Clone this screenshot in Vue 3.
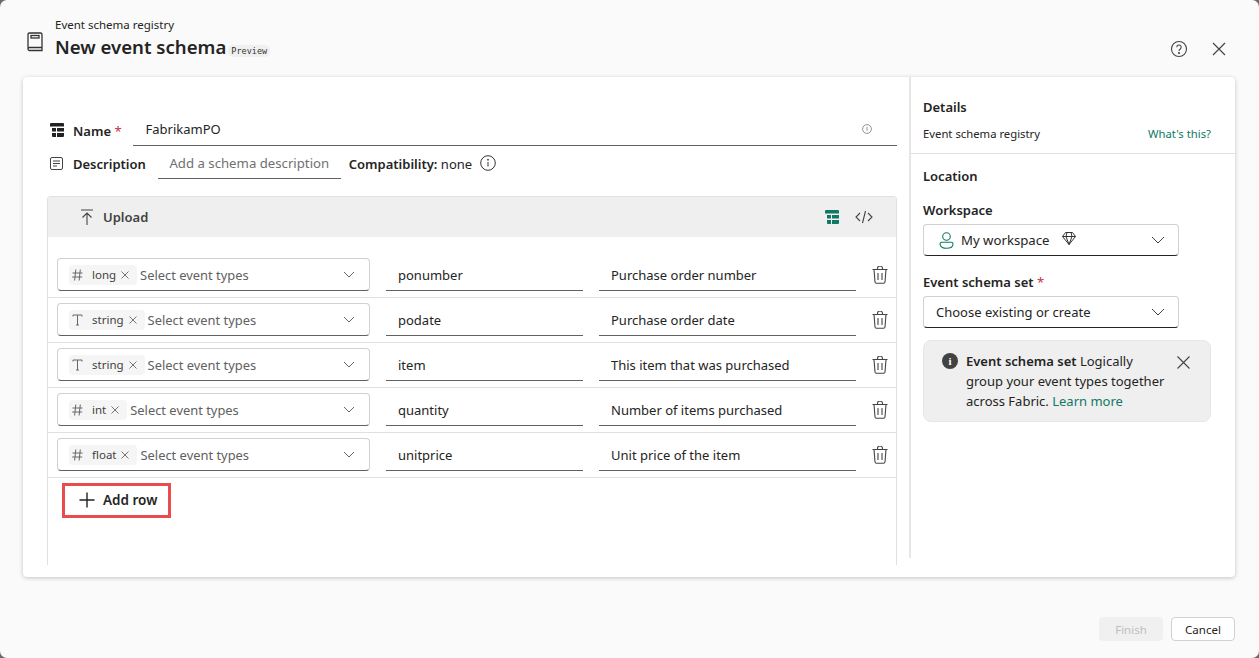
<script setup>
const rows = [
  { glyph: 'hash', type: 'long', name: 'ponumber', desc: 'Purchase order number' },
  { glyph: 'text', type: 'string', name: 'podate', desc: 'Purchase order date' },
  { glyph: 'text', type: 'string', name: 'item', desc: 'This item that was purchased' },
  { glyph: 'hash', type: 'int', name: 'quantity', desc: 'Number of items purchased' },
  { glyph: 'hash', type: 'float', name: 'unitprice', desc: 'Unit price of the item' },
]
</script>

<template>
  <div class="shell">
    <!-- header -->
    <header class="head">
      <svg class="book" width="18" height="22" viewBox="0 0 18 22" fill="none" stroke="#333" stroke-width="1.3">
        <path d="M2 18V3.500A1.500 1.500 0 0 1 3.500 2h11A1.500 1.500 0 0 1 16 3.500V19.500H3.500A1.500 1.500 0 0 1 2 18a1.500 1.500 0 0 1 1.500-1.500H16" />
        <rect x="5" y="4.500" width="8" height="2.500" />
      </svg>
      <div class="head-text">
        <div class="crumb">Event schema registry</div>
        <div class="title-line">
          <h1>New event schema</h1>
          <span class="preview">Preview</span>
        </div>
      </div>
      <div class="head-actions">
        <svg width="18" height="18" viewBox="0 0 18 18" fill="none" stroke="#444" stroke-width="1.100">
          <circle cx="9" cy="9" r="7.500" />
          <path d="M6.800 7.200a2.200 2.200 0 1 1 3.500 1.800c-.8.600-1.300 1-1.300 2" />
          <circle cx="9" cy="13" r=".5" fill="#444" />
        </svg>
        <svg width="14" height="14" viewBox="0 0 14 14" stroke="#444" stroke-width="1.200">
          <path d="M1 1l12 12M13 1L1 13" />
        </svg>
      </div>
    </header>

    <main class="card">
      <section class="form">
        <div class="name-row">
          <svg class="lead" width="14" height="14" viewBox="0 0 14 14" fill="#222">
            <path d="M0 1a1 1 0 0 1 1-1h12a1 1 0 0 1 1 1v2.500H0zM2 5h4v3.500H2zM7 5h7v3.500H7zM2 10h4v4H3a1 1 0 0 1-1-1zM7 10h7v3a1 1 0 0 1-1 1H7z" />
          </svg>
          <span class="lbl">Name <i class="req">*</i></span>
          <div class="name-input">
            <span>FabrikamPO</span>
            <svg width="10" height="10" viewBox="0 0 10 10" fill="none" stroke="#888" stroke-width=".9">
              <circle cx="5" cy="5" r="4.400" />
              <path d="M5 2.800v3.800" />
            </svg>
          </div>
        </div>

        <div class="desc-row">
          <svg class="lead lead-desc" width="13" height="13" viewBox="0 0 13 13" fill="none" stroke="#444">
            <rect x=".5" y=".5" width="12" height="12" rx="1.500" />
            <path d="M3 4h7M3 6.500h7M3 9h4" />
          </svg>
          <span class="lbl">Description</span>
          <div class="desc-input">Add a schema description</div>
          <span class="compat"><b>Compatibility:</b> none</span>
          <svg width="16" height="16" viewBox="0 0 16 16" fill="none" stroke="#333">
            <circle cx="8" cy="8" r="7.300" />
            <path d="M8 7v4.500" />
            <circle cx="8" cy="4.800" r=".5" fill="#333" />
          </svg>
        </div>

        <div class="grid">
          <div class="toolbar">
            <div class="upload">
              <svg width="14" height="17" viewBox="0 0 14 17" fill="none" stroke="#444" stroke-width="1.100">
                <path d="M1 1h12M7 16V4M2.500 8.500L7 4l4.500 4.500" />
              </svg>
              <span>Upload</span>
            </div>
            <div class="tool-icons">
              <svg width="14" height="14" viewBox="0 0 14 14" fill="#117865">
                <path d="M0 1a1 1 0 0 1 1-1h12a1 1 0 0 1 1 1v2.500H0zM2 5h4v3.500H2zM7 5h7v3.500H7zM2 10h4v4H3a1 1 0 0 1-1-1zM7 10h7v3a1 1 0 0 1-1 1H7z" />
              </svg>
              <svg width="18" height="14" viewBox="0 0 18 14" fill="none" stroke="#444" stroke-width="1.100">
                <path d="M5 3L1 7l4 4M13 3l4 4-4 4M10.500 1L7.500 13" />
              </svg>
            </div>
          </div>

          <div class="rows">
            <div v-for="row in rows" :key="row.name" class="row">
              <div class="combo">
                <span class="tag">
                  <svg v-if="row.glyph === 'hash'" width="11" height="12" viewBox="0 0 11 12" fill="none" stroke="#666">
                    <path d="M3.800 .5L2.600 11.500M8.300 .5L7.100 11.500M.5 4h10M.2 8h10" />
                  </svg>
                  <svg v-else width="11" height="12" viewBox="0 0 11 12" fill="none" stroke="#666">
                    <path d="M1 2.500V1h9v1.500M5.500 1v10M4 11h3" />
                  </svg>
                  <span class="tag-name">{{ row.type }}</span>
                  <svg width="8" height="8" viewBox="0 0 8 8" stroke="#666" stroke-width=".9">
                    <path d="M.5 .5l7 7M7.500 .5l-7 7" />
                  </svg>
                </span>
                <span class="combo-ph">Select event types</span>
                <svg class="chev" width="12" height="7" viewBox="0 0 12 7" fill="none" stroke="#666">
                  <path d="M1 1l5 5 5-5" />
                </svg>
              </div>
              <div class="cell cell-name">{{ row.name }}</div>
              <div class="cell cell-desc">{{ row.desc }}</div>
              <svg class="trash" width="16" height="18" viewBox="0 0 16 18" fill="none" stroke="#444" stroke-width="1.100">
                <path d="M.5 3.500h15M5.500 3.500V2.500a2 2 0 0 1 5 0v1M2 3.500l1 12.500a1.500 1.500 0 0 0 1.500 1.300h7a1.500 1.500 0 0 0 1.500-1.300l1-12.500M6 7v7M10 7v7" />
              </svg>
            </div>
          </div>

          <button class="add-row">
            <svg width="16" height="16" viewBox="0 0 16 16" stroke="#222" stroke-width="1.400">
              <path d="M8 .5v15M.5 8h15" />
            </svg>
            <span>Add row</span>
          </button>
        </div>
      </section>

      <aside class="side">
        <div class="side-top">
          <h2>Details</h2>
          <div class="side-meta">
            <span>Event schema registry</span>
            <a>What's this?</a>
          </div>
        </div>
        <div class="side-body">
          <h2>Location</h2>
          <label class="field-lbl ws-lbl">Workspace</label>
          <div class="select">
            <svg class="ws-icon" width="15" height="17" viewBox="0 0 15 17" fill="none" stroke="#117865" stroke-width="1.100">
              <circle cx="7.500" cy="4.500" r="3.800" />
              <path d="M1 12a1.800 1.800 0 0 1 1.800-1.800h9.400A1.800 1.800 0 0 1 14 12c0 2.800-3 4.300-6.500 4.300S1 14.800 1 12z" />
            </svg>
            <span class="ws-name">My workspace</span>
            <svg class="gem" width="14" height="13" viewBox="0 0 14 13" fill="none" stroke="#333">
              <path d="M3.500 .5h7l3 4-6.500 8-6.500-8zM.5 4.500h13M5 .5l-1 4 3 8 3-8-1-4" />
            </svg>
            <svg class="chev" width="14" height="8" viewBox="0 0 14 8" fill="none" stroke="#444">
              <path d="M1 1l6 6 6-6" />
            </svg>
          </div>
          <label class="field-lbl set-lbl">Event schema set <i class="req">*</i></label>
          <div class="select">
            <span>Choose existing or create</span>
            <svg class="chev" width="14" height="8" viewBox="0 0 14 8" fill="none" stroke="#444">
              <path d="M1 1l6 6 6-6" />
            </svg>
          </div>
          <div class="note">
            <span class="note-icon">i</span>
            <p><b>Event schema set</b> Logically group your event types together across Fabric. <a>Learn more</a></p>
            <svg class="note-x" width="13" height="13" viewBox="0 0 13 13" stroke="#444" stroke-width="1.100">
              <path d="M.5 .5l12 12M12.500 .5l-12 12" />
            </svg>
          </div>
        </div>
      </aside>
    </main>

    <footer class="foot">
      <button class="btn btn-off">Finish</button>
      <button class="btn">Cancel</button>
    </footer>
  </div>
</template>

<style>
html, body { margin: 0; background: #6f6a68; }
</style>

<style scoped>
.shell {
  width: 1259px;
  height: 658px;
  box-sizing: border-box;
  overflow: hidden;
  background: #fafafa;
  border-radius: 7px;
  padding: 0 24px 0 23px;
  display: flex;
  flex-direction: column;
  font-family: "Noto Sans", "Open Sans", sans-serif;
  font-size: 13px;
  color: #242424;
}
svg { flex: none; display: block; }

/* header */
.head {
  height: 77px;
  flex: none;
  display: flex;
  box-sizing: border-box;
  padding-top: 17px;
}
.book { margin: 14px 0 0 3px; }
.head-text { margin-left: 11px; }
.crumb { font-size: 11.500px; line-height: 15px; }
.title-line { display: flex; align-items: flex-end; margin-top: 2px; }
h1 { margin: 0; font-size: 18.600px; font-weight: 600; line-height: 26px; }
.preview {
  font-family: "DejaVu Sans Mono", monospace;
  font-size: 8.500px;
  line-height: 12px;
  padding: 0 3px;
  margin: 0 0 3px 2px;
  background: #f0f0f0;
  border-radius: 5px;
  color: #333;
}
.head-actions {
  margin-left: auto;
  display: flex;
  align-items: center;
  gap: 24px;
  height: 18px;
  margin-top: 23px;
  padding-right: 9px;
}

/* card */
.card {
  height: 500px;
  flex: none;
  display: flex;
  background: #fff;
  border-radius: 4px;
  box-shadow: 0 1px 4px rgba(0, 0, 0, .22);
}
.form {
  width: 888px;
  height: 481px;
  box-sizing: border-box;
  padding: 37px 12px 0 24px;
  border-right: 2px solid #e6e6e6;
  flex: none;
}
.name-row { display: flex; align-items: center; height: 32px; padding-left: 3px; }
.lead { margin-right: 9px; }
.lead-desc { margin-right: 10px; }
.lbl { font-weight: 600; padding-top: 2px; }
.req { color: #c4314b; font-style: normal; font-weight: 400; }
.name-input {
  margin-left: 11px;
  flex: 1;
  height: 32px;
  box-sizing: border-box;
  border-bottom: 1px solid #616161;
  display: flex;
  align-items: center;
  justify-content: space-between;
  padding: 0 25px 2px 13px;
  font-size: 13px;
}
.desc-row { display: flex; align-items: center; height: 34px; padding-left: 3px; }
.desc-input {
  margin-left: 12px;
  width: 183px;
  box-sizing: border-box;
  height: 32px;
  line-height: 33px;
  text-align: center;
  font-size: 13.200px;
  border-bottom: 1px solid #616161;
  color: #707070;
}
.compat { margin: 0 8px 0 8px; padding-top: 2px; }
.compat b { font-weight: 600; }

.grid {
  margin-top: 16px;
  height: 369px;
  box-sizing: border-box;
  border: solid #e0e0e0;
  border-width: 1px 1px 0;
  border-radius: 4px 4px 0 0;
}
.toolbar {
  height: 40px;
  background: #efefef;
  display: flex;
  align-items: center;
  justify-content: space-between;
  padding: 0 23px 0 32px;
}
.upload { display: flex; align-items: center; gap: 9px; font-weight: 600; color: #424242; }
.tool-icons { display: flex; align-items: center; gap: 16px; }

.rows { padding-top: 16px; }
.row {
  height: 45px;
  box-sizing: border-box;
  border-bottom: 1px solid #e0e0e0;
  display: flex;
  align-items: center;
  padding: 0 0 1px 9px;
}
.combo {
  width: 313px;
  height: 33px;
  box-sizing: border-box;
  display: flex;
  align-items: center;
  border: 1px solid #d1d1d1;
  border-bottom-color: #616161;
  border-radius: 4px;
  padding: 0 14px 0 11px;
}
.tag {
  display: flex;
  align-items: center;
  height: 20px;
  padding: 0 8px 0 3px;
  background: #f5f5f5;
  border-radius: 4px;
  color: #424242;
  font-size: 11.500px;
}
.tag-name { margin: 0 5px 0 9px; }
.combo-ph { margin-left: 3px; color: #616161; font-size: 12.900px; }
.chev { margin-left: auto; }
.cell {
  height: 33px;
  line-height: 35px;
  box-sizing: border-box;
  border-bottom: 1px solid #616161;
  padding-left: 12px;
  margin-left: 16px;
}
.cell-name { width: 197px; }
.cell-desc { width: 257px; }
.trash { margin-left: 16px; }

.add-row {
  display: flex;
  align-items: center;
  gap: 8px;
  width: 109px;
  height: 35px;
  margin: 5px 0 0 14px;
  padding: 0 0 2px 14px;
  box-sizing: border-box;
  border: 3px solid #e84c4c;
  background: #fff;
  font: inherit;
  font-size: 13.500px;
  font-weight: 600;
  color: #242424;
}

/* side panel */
.side { flex: 1; }
.side-top { height: 77px; box-sizing: border-box; border-bottom: 1px solid #e0e0e0; padding: 20px 24px 0 12px; }
h2 { margin: 0; font-size: 13px; font-weight: 600; line-height: 20px; }
.side-meta { display: flex; justify-content: space-between; margin-top: 9px; font-size: 11.300px; line-height: 16px; }
a { color: #117865; }
.side-body { padding: 12px 24px 0 12px; }
.field-lbl { display: block; font-weight: 600; line-height: 18px; margin-bottom: 5px; }
.ws-lbl { margin-top: 15px; }
.set-lbl { margin-top: 17px; }
.select {
  width: 256px;
  height: 32px;
  box-sizing: border-box;
  display: flex;
  align-items: center;
  border: 1px solid #d1d1d1;
  border-bottom-color: #242424;
  border-radius: 4px;
  padding: 0 13px 0 12px;
}
.ws-icon { margin-left: 3px; }
.ws-name { margin-left: 7px; font-size: 13.200px; }
.gem { margin: -4px 0 0 12px; }
.note {
  margin-top: 12px;
  height: 82px;
  box-sizing: border-box;
  display: flex;
  align-items: flex-start;
  background: #efefef;
  border: 1px solid #e6e6e6;
  border-radius: 8px;
  padding: 10px 20px 0 18px;
  line-height: 20px;
}
.note-icon {
  flex: none;
  width: 16px;
  height: 16px;
  margin: 2px 8px 0 0;
  border-radius: 50%;
  background: #424242;
  color: #fff;
  font: 700 11px/16px "Liberation Serif", serif;
  text-align: center;
}
.note p { margin: 0; width: 206px; }
.note b { font-weight: 600; }
.note-x { margin: 5px 0 0 auto; }

/* footer */
.foot {
  flex: 1;
  display: flex;
  justify-content: flex-end;
  gap: 8px;
  padding-top: 40px;
}
.btn {
  width: 64px;
  height: 24px;
  box-sizing: border-box;
  padding: 0;
  border: 1px solid #d1d1d1;
  border-radius: 4px;
  background: #fff;
  font: inherit;
  font-size: 11.500px;
  color: #242424;
}
.btn-off { background: #f0f0f0; border-color: #f0f0f0; color: #bdbdbd; }
</style>
